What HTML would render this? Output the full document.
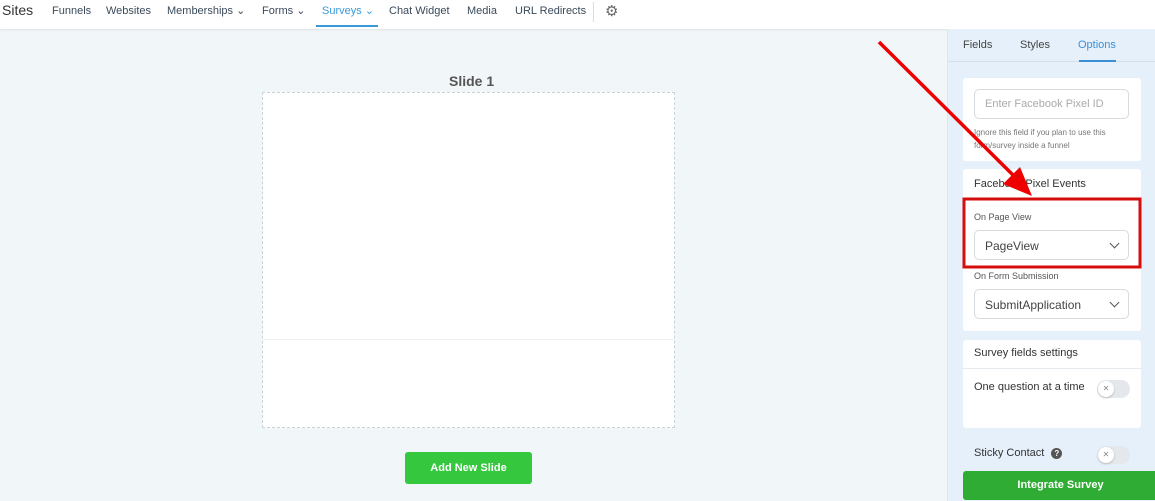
<!DOCTYPE html>
<html><head><style>
*{box-sizing:border-box;margin:0;padding:0}
body{width:1155px;height:501px;overflow:hidden;font-family:"Liberation Sans",sans-serif;background:#f1f6f9;position:relative;color:#333}
.nav{position:absolute;left:0;top:0;width:1155px;height:29px;background:#fff;box-shadow:0 1px 2px rgba(0,0,0,.08);font-size:11px;color:#3a4a5a}
.nav span{position:absolute;top:4px;line-height:14px}
.panel{position:absolute;left:947px;top:29px;width:208px;height:472px;background:#e6f0fa;border-left:1px solid #dde6ee}
.card{position:absolute;left:15px;width:178px;background:#fff;border-radius:3px}
.inp{position:absolute;left:11px;width:155px;height:30px;border:1px solid #d6dbe0;border-radius:5px;background:#fff;font-size:12px;color:#444;padding:8px 10px}
.chev{position:absolute;right:10px;top:9px;width:7px;height:7px;border-right:1.5px solid #555;border-bottom:1.5px solid #555;transform:rotate(45deg)}
.tog{position:absolute;width:33px;height:18px;border-radius:9px;background:#e4e7eb}
.tog i{position:absolute;left:1px;top:1px;width:16px;height:16px;border-radius:8px;background:#fff;box-shadow:0 1px 2px rgba(0,0,0,.2);font-size:8px;color:#888;text-align:center;line-height:16px;font-style:normal}
.s{font-size:9px;color:#555;position:absolute}
</style></head><body>
<div class="nav">
<span style="left:2px;font-size:14px;top:3px;color:#333">Sites</span>
<span style="left:52px">Funnels</span>
<span style="left:106px">Websites</span>
<span style="left:167px">Memberships ⌄</span>
<span style="left:262px">Forms ⌄</span>
<span style="left:322px;color:#3a9ad9">Surveys ⌄</span>
<div style="position:absolute;left:316px;top:25px;width:62px;height:2px;background:#3a9ad9"></div>
<span style="left:389px">Chat Widget</span>
<span style="left:467px">Media</span>
<span style="left:515px">URL Redirects</span>
<div style="position:absolute;left:593px;top:2px;width:1px;height:20px;background:#ddd"></div>
<span style="left:605px;font-size:15px;top:4px;line-height:16px;color:#666">⚙</span>
</div>
<div style="position:absolute;left:449px;top:73px;font-size:14px;font-weight:bold;color:#555">Slide 1</div>
<div style="position:absolute;left:262px;top:92px;width:413px;height:336px;background:#fff;border:1px dashed #c8d2da"></div>
<div style="position:absolute;left:263px;top:339px;width:411px;height:1px;background:#eef1f3"></div>
<div style="position:absolute;left:405px;top:452px;width:127px;height:32px;background:#35c73d;border-radius:3px;color:#fff;font-size:11px;font-weight:bold;text-align:center;line-height:32px">Add New Slide</div>
<div class="panel">
<div style="position:absolute;left:0;top:0;width:208px;height:33px;border-bottom:1px solid #d5dfe8"></div>
<span style="position:absolute;left:15px;top:10px;font-size:11px;color:#444">Fields</span>
<span style="position:absolute;left:72px;top:10px;font-size:11px;color:#444">Styles</span>
<span style="position:absolute;left:130px;top:10px;font-size:11px;color:#3a8fd6">Options</span>
<div style="position:absolute;left:131px;top:31px;width:37px;height:2px;background:#3a8fd6"></div>
<div class="card" style="top:49px;height:83px">
<div class="inp" style="top:11px;color:#aaa;font-size:11px">Enter Facebook Pixel ID</div>
<div class="s" style="left:11px;top:48px;line-height:13px;color:#777;font-size:8px;width:160px">Ignore this field if you plan to use this form/survey inside a funnel</div>
</div>
<div class="card" style="top:140px;height:162px">
<div style="position:absolute;left:11px;top:9px;font-size:11px;color:#333">Facebook Pixel Events</div>
<div class="s" style="left:11px;top:43px">On Page View</div>
<div class="inp" style="top:61px;font-size:12px">PageView<div class="chev"></div></div>
<div class="s" style="left:11px;top:102px">On Form Submission</div>
<div class="inp" style="top:120px;font-size:12px">SubmitApplication<div class="chev"></div></div>
</div>
<div class="card" style="top:311px;height:88px">
<div style="position:absolute;left:11px;top:7px;font-size:11px">Survey fields settings</div>
<div style="position:absolute;left:0;top:28px;width:178px;height:1px;background:#e6ebef"></div>
<div style="position:absolute;left:11px;top:41px;font-size:11px">One question at a time</div>
<div class="tog" style="left:134px;top:40px"><i>✕</i></div>
</div>
<div style="position:absolute;left:26px;top:418px;font-size:11px">Sticky Contact <span style="display:inline-block;width:11px;height:11px;border-radius:6px;background:#555;color:#fff;font-size:8px;text-align:center;line-height:11px;font-weight:bold;margin-left:4px">?</span></div>
<div class="tog" style="left:149px;top:417px"><i>✕</i></div>
<div style="position:absolute;left:15px;top:442px;width:195px;height:29px;background:#2eac33;border-radius:3px;color:#fff;font-size:11px;font-weight:bold;text-align:center;line-height:29px">Integrate Survey</div>
</div>
<svg style="position:absolute;left:0;top:0" width="1155" height="501">
<line x1="879" y1="42" x2="1018" y2="180" stroke="#e00" stroke-width="3.5"/>
<polygon points="1032,196 1003,184 1020,167" fill="#e00"/>
<rect x="964" y="199" width="176" height="68" fill="none" stroke="#d50d0d" stroke-width="3"/>
</svg>
</body></html>
